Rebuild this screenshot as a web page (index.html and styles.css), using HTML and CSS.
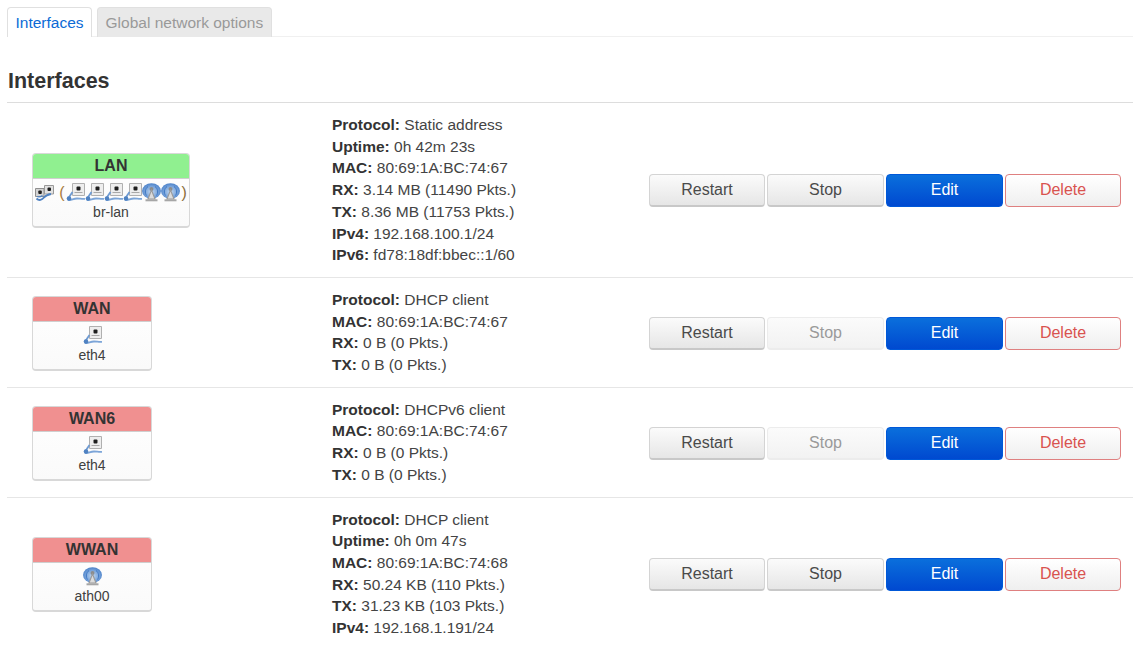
FILE: index.html
```html
<!DOCTYPE html>
<html lang="en">
<head>
<meta charset="utf-8">
<title>Interfaces</title>
<link rel="stylesheet" href="styles.css">
</head>
<body>
<svg class="defs" width="0" height="0" aria-hidden="true">
  <defs>
    <radialGradient id="wave" cx=".5" cy=".55" r=".6">
      <stop offset="0" stop-color="#c3d8f0"/>
      <stop offset=".55" stop-color="#7ba6dc"/>
      <stop offset="1" stop-color="#3f78c4"/>
    </radialGradient>
    <symbol id="eth" viewBox="0 0 19 19">
      <path d="M6.500 .5h12v12h-12z" fill="#eeeeee" stroke="#b0b0b0"/>
      <rect x="10.500" y="3.500" width="4" height="4" rx="1" fill="#1e1e1e"/>
      <path d="M8.500 9.500h8" stroke="#a8a8a8"/>
      <path d="M6.500 9 2.800 14.500" fill="none" stroke="#6f9bd2" stroke-width="1.800"/>
      <path d="M2 16.800c3 1 5-1.300 9-1.300 3 0 5 .6 8 .3" fill="none" stroke="#7ca5d8" stroke-width="1.800"/>
      <circle cx="3" cy="15.500" r="2.300" fill="#4f82c2"/>
    </symbol>
    <symbol id="bridge" viewBox="0 0 19 19">
      <path d="M.5 5.500h8.500v8H.5z" fill="#d4d4d4" stroke="#8f8f8f"/>
      <path d="M9.500 2.500h9v8.500h-9z" fill="#e2e2e2" stroke="#9a9a9a"/>
      <rect x="3.300" y="7.500" width="3.500" height="3.500" rx="1" fill="#1e1e1e"/>
      <rect x="12.500" y="4.500" width="3.500" height="3.500" rx="1" fill="#1e1e1e"/>
      <path d="M1.500 15.500c2.500 2.500 5.500 1.500 7.500-1s4-3 7-3.500" fill="none" stroke="#4f82c2" stroke-width="1.900"/>
      <path d="M2 13.500c2 .8 4 .2 5.500-1" fill="none" stroke="#4f82c2" stroke-width="1.300"/>
    </symbol>
    <symbol id="wifi" viewBox="0 0 19 19">
      <ellipse cx="9.500" cy="8" rx="9.500" ry="7.800" fill="url(#wave)"/>
      <path d="M4.500 12.500C2.700 10 3 5.500 6 3.500M14.500 12.500c1.800-2.500 1.500-7-1.500-9" fill="none" stroke="#3f78c4" stroke-width="1"/>
      <circle cx="9.500" cy="6" r="2" fill="#8c8c8c"/>
      <path d="M9.500 7 6 16h7z" fill="#dcdcdc" stroke="#9a9a9a" stroke-width="1.100"/>
      <path d="M3.500 17.300h12" stroke="#a6a6a6" stroke-width="2"/>
    </symbol>
  </defs>
</svg>

<ul class="tabs">
  <li class="tab tab-active">Interfaces</li>
  <li class="tab">Global network options</li>
</ul>

<h2 class="title">Interfaces</h2>

<div class="table">
  <div class="row">
    <div class="name-cell">
      <div class="badge badge-wide">
        <div class="badge-head lan">LAN</div>
        <div class="badge-body">
          <div class="icons">
            <svg class="ic"><use href="#bridge"/></svg>
            <span class="paren paren-open">(</span>
            <svg class="ic"><use href="#eth"/></svg><svg class="ic"><use href="#eth"/></svg><svg class="ic"><use href="#eth"/></svg><svg class="ic"><use href="#eth"/></svg><svg class="ic"><use href="#wifi"/></svg><svg class="ic"><use href="#wifi"/></svg>
            <span class="paren paren-close">)</span>
          </div>
          <div class="dev">br-lan</div>
        </div>
      </div>
    </div>
    <div class="info">
      <div><b>Protocol:</b> Static address</div>
      <div><b>Uptime:</b> 0h 42m 23s</div>
      <div><b>MAC:</b> 80:69:1A:BC:74:67</div>
      <div><b>RX:</b> 3.14 MB (11490 Pkts.)</div>
      <div><b>TX:</b> 8.36 MB (11753 Pkts.)</div>
      <div><b>IPv4:</b> 192.168.100.1/24</div>
      <div><b>IPv6:</b> fd78:18df:bbec::1/60</div>
    </div>
    <div class="actions">
      <button class="btn">Restart</button><button class="btn">Stop</button><button class="btn btn-edit">Edit</button><button class="btn btn-del">Delete</button>
    </div>
  </div>

  <div class="row">
    <div class="name-cell">
      <div class="badge">
        <div class="badge-head wan">WAN</div>
        <div class="badge-body">
          <div class="icons"><svg class="ic"><use href="#eth"/></svg></div>
          <div class="dev">eth4</div>
        </div>
      </div>
    </div>
    <div class="info">
      <div><b>Protocol:</b> DHCP client</div>
      <div><b>MAC:</b> 80:69:1A:BC:74:67</div>
      <div><b>RX:</b> 0 B (0 Pkts.)</div>
      <div><b>TX:</b> 0 B (0 Pkts.)</div>
    </div>
    <div class="actions">
      <button class="btn">Restart</button><button class="btn btn-off" disabled>Stop</button><button class="btn btn-edit">Edit</button><button class="btn btn-del">Delete</button>
    </div>
  </div>

  <div class="row">
    <div class="name-cell">
      <div class="badge">
        <div class="badge-head wan">WAN6</div>
        <div class="badge-body">
          <div class="icons"><svg class="ic"><use href="#eth"/></svg></div>
          <div class="dev">eth4</div>
        </div>
      </div>
    </div>
    <div class="info">
      <div><b>Protocol:</b> DHCPv6 client</div>
      <div><b>MAC:</b> 80:69:1A:BC:74:67</div>
      <div><b>RX:</b> 0 B (0 Pkts.)</div>
      <div><b>TX:</b> 0 B (0 Pkts.)</div>
    </div>
    <div class="actions">
      <button class="btn">Restart</button><button class="btn btn-off" disabled>Stop</button><button class="btn btn-edit">Edit</button><button class="btn btn-del">Delete</button>
    </div>
  </div>

  <div class="row">
    <div class="name-cell">
      <div class="badge">
        <div class="badge-head wan">WWAN</div>
        <div class="badge-body">
          <div class="icons"><svg class="ic"><use href="#wifi"/></svg></div>
          <div class="dev">ath00</div>
        </div>
      </div>
    </div>
    <div class="info">
      <div><b>Protocol:</b> DHCP client</div>
      <div><b>Uptime:</b> 0h 0m 47s</div>
      <div><b>MAC:</b> 80:69:1A:BC:74:68</div>
      <div><b>RX:</b> 50.24 KB (110 Pkts.)</div>
      <div><b>TX:</b> 31.23 KB (103 Pkts.)</div>
      <div><b>IPv4:</b> 192.168.1.191/24</div>
    </div>
    <div class="actions">
      <button class="btn">Restart</button><button class="btn">Stop</button><button class="btn btn-edit">Edit</button><button class="btn btn-del">Delete</button>
    </div>
  </div>
</div>
</body>
</html>
```

FILE: styles.css
```css
* { box-sizing: border-box; }
html, body { height: 100%; }
body {
  margin: 0;
  padding: 7px 0 0 7px;
  overflow: hidden;
  background: #fff;
  color: #404040;
  font-family: "Liberation Sans", Arial, sans-serif;
  font-size: 15.500px;
  line-height: 21.700px;
}
.defs { position: absolute; }
.tabs {
  display: flex;
  gap: 5px;
  margin: 0;
  padding: 0;
  height: 30px;
  list-style: none;
  border-bottom: 1px solid #f0f0f0;
}
.tab {
  height: 30px;
  padding: 4px 7.500px 0;
  border: 1px solid #e0e0e0;
  border-bottom: 0;
  border-radius: 4px 4px 0 0;
  background: #e9e9e9;
  color: #999;
  font-size: 15.500px;
  white-space: nowrap;
}
.tab-active {
  background: #fff;
  color: #0b6ad6;
}
.title {
  margin: 31px 0 0;
  padding-left: 1px;
  height: 34px;
  color: #333;
  font-size: 21.500px;
  line-height: 27px;
  font-weight: bold;
}
.table { border-top: 1px solid #ddd; }
.row {
  display: flex;
  align-items: center;
  padding: 11px 0;
  border-top: 1px solid #e6e6e6;
}
.table .row:first-child { border-top: 0; }
.name-cell { width: 325px; flex: none; padding: 2px 0 0 25px; }
.info { width: 317px; flex: none; color: #444; }
.info b { color: #333; }
.actions { display: flex; gap: 2px; padding-top: 2px; }
.badge {
  width: 120px;
  border: 1px solid #d8d8d8;
  border-bottom-width: 2px;
  border-radius: 4px;
  overflow: hidden;
  background: linear-gradient(#fff, #fafafa);
  text-align: center;
}
.badge-wide { width: 158px; }
.badge-head {
  height: 25px;
  color: #333;
  font-size: 16px;
  font-weight: bold;
  line-height: 24px;
  border-bottom: 1px solid #cfcfcf;
}
.lan { background: #90f090; }
.wan { background: #f09090; }
.badge-body { height: 47px; padding-top: 3px; font-size: 14px; }
.icons {
  display: flex;
  justify-content: center;
  align-items: center;
  height: 21px;
}
.ic { width: 19px; height: 19px; flex: none; filter: blur(.35px); }
.paren { font-size: 16px; color: #555; }
.paren-open { margin: 0 1px 0 5px; color: #a87a3c; }
.paren-close { margin-left: 2px; color: #8a6d3b; }
.dev { line-height: 18px; color: #404040; font-size: 14px; }
.btn {
  width: 116px;
  height: 33px;
  padding: 0;
  border: 1px solid #d4d4d4;
  border-bottom: 2px solid #c8c8c8;
  border-radius: 4px;
  background: linear-gradient(#fbfbfb, #e6e6e6);
  color: #4a4a4a;
  font: 16px "Liberation Sans", Arial, sans-serif;
}
.btn:nth-child(2), .btn:nth-child(3) { width: 117px; }
.btn-off {
  background: linear-gradient(#fbfbfb, #f2f2f2);
  border-color: #ececec;
  color: #9a9a9a;
}
.btn-edit {
  padding-bottom: 1px;
  background: linear-gradient(#0a6fdc, #0049d0);
  border: 1px solid #0058d8;
  color: #fff;
}
.btn-del {
  padding-bottom: 1px;
  border: 1px solid #df8080;
  background: linear-gradient(#fff, #efefef);
  color: #d9534f;
}
```
